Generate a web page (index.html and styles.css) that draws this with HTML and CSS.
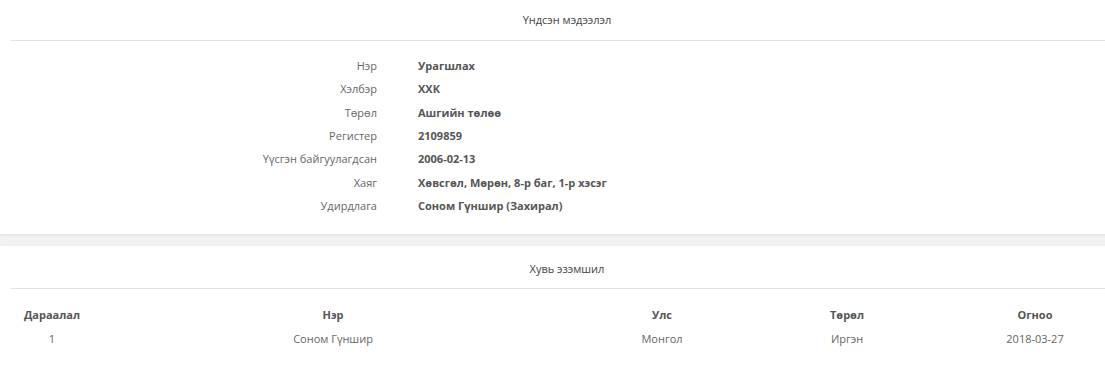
FILE: index.html
```html
<!DOCTYPE html>
<html>
<head>
<meta charset="utf-8">
<link rel="stylesheet" href="styles.css">
</head>
<body>
<div class="page">
  <section class="card card-info">
    <div class="card-head">Үндсэн мэдээлэл</div>
    <div class="info">
      <div class="label">Нэр</div><div class="value">Урагшлах</div>
      <div class="label">Хэлбэр</div><div class="value">ХХК</div>
      <div class="label">Төрөл</div><div class="value">Ашгийн төлөө</div>
      <div class="label">Регистер</div><div class="value">2109859</div>
      <div class="label">Үүсгэн байгуулагдсан</div><div class="value">2006-02-13</div>
      <div class="label">Хаяг</div><div class="value">Хөвсгөл, Мөрөн, 8-р баг, 1-р хэсэг</div>
      <div class="label">Удирдлага</div><div class="value">Соном Гүншир (Захирал)</div>
    </div>
  </section>
  <section class="card card-owners">
    <div class="card-head">Хувь эзэмшил</div>
    <div class="owners">
      <div class="th">Дараалал</div>
      <div class="th">Нэр</div>
      <div class="th">Улс</div>
      <div class="th">Төрөл</div>
      <div class="th">Огноо</div>
      <div class="td">1</div>
      <div class="td">Соном Гүншир</div>
      <div class="td">Монгол</div>
      <div class="td">Иргэн</div>
      <div class="td">2018-03-27</div>
    </div>
  </section>
</div>
</body>
</html>
```

FILE: styles.css
```css
html, body {
  margin: 0;
  padding: 0;
  overflow: hidden;
  background: #f2f2f2;
}
body {
  width: 1105px;
  height: 365px;
  font-family: "Open Sans", "Noto Sans", sans-serif;
  font-size: 11px;
  color: #555;
}
.page {
  width: 1134px;
  display: flex;
  flex-direction: column;
  gap: 12px;
}
.card {
  background: #fff;
  padding: 0 11px;
  box-shadow: 0 1px 3px rgba(0,0,0,0.08);
}
.card-head {
  text-align: center;
  color: #444;
  border-bottom: 1px solid #e3e3e3;
}
.card-info .card-head {
  height: 40px;
  line-height: 40px;
}
.card-owners .card-head {
  height: 42px;
  line-height: 46px;
}
.info {
  display: grid;
  grid-template-columns: 366px 1fr;
  column-gap: 41px;
  grid-auto-rows: 23.33px;
  align-items: center;
  padding: 13px 0 17px;
}
.label {
  text-align: right;
  color: #666;
}
.value {
  font-weight: 700;
  color: #555;
}
.owners {
  display: grid;
  grid-template-columns: 82px 480px 178px 192px 184px;
  grid-auto-rows: 24px;
  align-items: center;
  text-align: center;
  padding: 13px 0 20px;
}
.th {
  font-weight: 700;
  color: #555;
}
.td {
  color: #666;
}
```
